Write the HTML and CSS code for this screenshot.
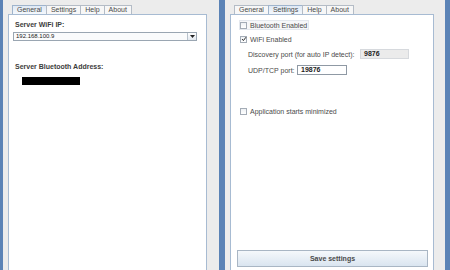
FILE: index.html
```html
<!DOCTYPE html>
<html>
<head>
  <title>Remote Server</title>
  <link rel="stylesheet" href="styles.css">
</head>
<body>
  <div class="window window-left">
    <div class="tabs">
      <span class="tab active">General</span>
      <span class="tab">Settings</span>
      <span class="tab">Help</span>
      <span class="tab">About</span>
    </div>
    <div class="panel">
      <div class="field-label wifi-label">Server WiFi IP:</div>
      <div class="combo">
        <span class="combo-text">192.168.100.9</span>
        <span class="combo-btn">
          <svg width="5" height="3" viewBox="0 0 5 3"><path d="M0 0 L5 0 L2.5 3 Z" fill="#222"/></svg>
        </span>
      </div>
      <div class="field-label bt-label">Server Bluetooth Address:</div>
      <div class="redacted"></div>
    </div>
  </div>

  <div class="window window-right">
    <div class="tabs">
      <span class="tab">General</span>
      <span class="tab active">Settings</span>
      <span class="tab">Help</span>
      <span class="tab">About</span>
    </div>
    <div class="panel settings">
      <label class="check row-bt focused"><span class="box"></span>Bluetooth Enabled</label>
      <label class="check row-wifi"><span class="box checked">
        <svg width="6" height="6" viewBox="0 0 6 6"><path d="M1 3 L2.4 4.6 L5 1.2" stroke="#333" stroke-width="1" fill="none"/></svg>
      </span>WiFi Enabled</label>
      <div class="port-row row-discovery">
        <span class="port-label">Discovery port (for auto IP detect):</span>
        <span class="input disabled">9876</span>
      </div>
      <div class="port-row row-udp">
        <span class="port-label">UDP/TCP port:</span>
        <span class="input">19876</span>
      </div>
      <label class="check row-min"><span class="box"></span>Application starts minimized</label>
      <div class="save-btn">Save settings</div>
    </div>
  </div>
</body>
</html>
```

FILE: styles.css
```css
body {
  margin: 0;
  display: flex;
  width: 450px;
  height: 270px;
  overflow: hidden;
  font-family: "Liberation Sans", Arial, sans-serif;
  font-size: 7px;
  color: #4a4a4a;
}

.window {
  display: flex;
  flex-direction: column;
  height: 270px;
  box-sizing: border-box;
  background-color: #ececec;
  padding-top: 5px;
}

.window-left {
  width: 225px;
  border-left: 3px solid #5b83b6;
  border-right: 6px solid #5b83b6;
  padding-left: 5px;
  padding-right: 12px;
}

.window-right {
  width: 225px;
  border-right: 5px solid #5b83b6;
  padding-left: 5px;
  padding-right: 11px;
}

.tabs {
  display: flex;
  height: 9px;
  padding-left: 4px;
}

.tab {
  display: flex;
  align-items: center;
  padding: 0 4px;
  border: 1px solid #b4bcc6;
  border-bottom: none;
  border-right: none;
  background-color: #f7f7f7;
  line-height: 8px;
}

.tab:last-child {
  border-right: 1px solid #b4bcc6;
}

.tab.active {
  background: linear-gradient(#dfe9f5, #f4f8fc);
  border-color: #9fb4cc;
}

.panel {
  flex: 1;
  display: flex;
  flex-direction: column;
  background-color: #ffffff;
  border: 1px solid #a7bbd2;
  border-bottom: none;
}

.field-label {
  font-weight: bold;
  line-height: 10px;
  margin-left: 6px;
  color: #3c3c3c;
}

.wifi-label {
  margin-top: 5px;
}

.combo {
  display: flex;
  height: 9px;
  margin: 2px 9px 0 4px;
  border: 1px solid #9aa6b2;
  box-sizing: border-box;
  background-color: #fafbfc;
}

.combo-text {
  flex: 1;
  font-size: 6px;
  line-height: 7px;
  padding-left: 2px;
  color: #222;
}

.combo-btn {
  width: 8px;
  display: flex;
  align-items: center;
  justify-content: center;
  border-left: 1px solid #b8c2cc;
  background: linear-gradient(#ffffff, #e2e8ef);
}

.bt-label {
  margin-top: 21px;
}

.redacted {
  width: 58px;
  height: 8px;
  margin: 5px 0 0 13px;
  background-color: #000000;
}

.check {
  display: flex;
  align-items: center;
  align-self: flex-start;
  height: 10px;
  margin-left: 8px;
  padding: 0 2px 0 1px;
}

.box {
  width: 5px;
  height: 5px;
  margin-right: 3px;
  border: 1px solid #a4acb6;
  background: linear-gradient(#eef1f4, #ffffff);
  display: flex;
  align-items: center;
  justify-content: center;
}

.box svg {
  flex: none;
}

.focused {
  box-shadow: inset 0 0 0 1px #e4e8ee;
  background-color: #f6f7f9;
}

.row-bt {
  margin-top: 5px;
}

.row-wifi {
  margin-top: 4px;
}

.port-row {
  display: flex;
  align-items: center;
  height: 10px;
  margin-left: 17px;
}

.row-discovery {
  margin-top: 5px;
}

.row-discovery .port-label {
  width: 112px;
}

.row-udp {
  margin-top: 6px;
}

.row-udp .port-label {
  width: 49px;
}

.input {
  height: 10px;
  box-sizing: border-box;
  border: 1px solid #8f99a4;
  padding-left: 3px;
  font-weight: bold;
  line-height: 8px;
  color: #222;
  width: 50px;
  background-color: #ffffff;
}

.input.disabled {
  width: 49px;
  border-color: #d6d9dd;
  background-color: #ebebeb;
}

.row-min {
  margin-top: 31px;
}

.save-btn {
  margin: auto 5px 3px 6px;
  height: 17px;
  display: flex;
  align-items: center;
  justify-content: center;
  font-weight: bold;
  border: 1px solid #a9b6c4;
  box-sizing: border-box;
  background: linear-gradient(#f5f8fb, #dae5f0);
}
```
